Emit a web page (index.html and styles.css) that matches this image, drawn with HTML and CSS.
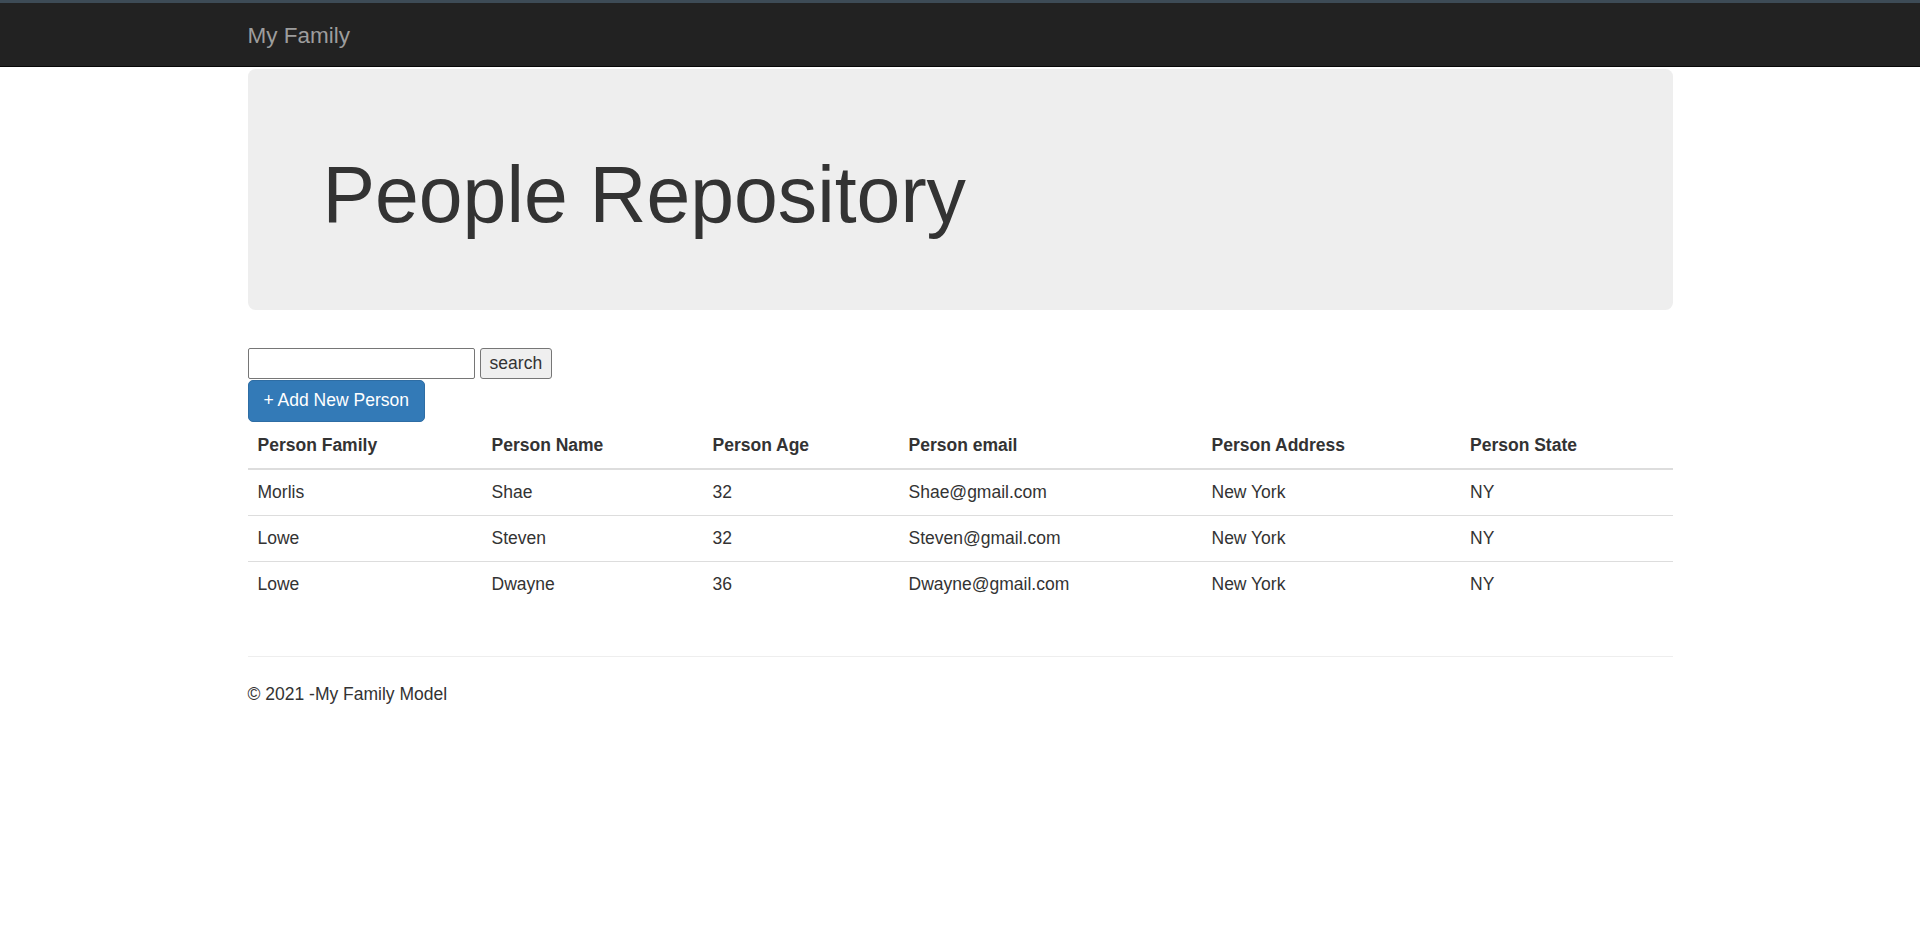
FILE: index.html
```html
<!DOCTYPE html>
<html lang="en">
<head>
<meta charset="utf-8">
<title>People Repository - My Family</title>
<link rel="stylesheet" href="styles.css">
</head>
<body>
<div class="topstrip"></div>
<nav class="navbar">
  <div class="container">
    <a class="brand" href="#">My Family</a>
  </div>
</nav>
<main class="container body-content">
  <div class="jumbotron">
    <h1>People Repository</h1>
  </div>
  <form class="search-form">
    <input class="search-input" type="text">
    <button class="search-btn" type="button">search</button>
  </form>
  <div class="actions">
    <a class="btn-primary" href="#">+ Add New Person</a>
  </div>
  <table class="people">
    <thead>
      <tr>
        <th class="c1">Person Family</th>
        <th class="c2">Person Name</th>
        <th class="c3">Person Age</th>
        <th class="c4">Person email</th>
        <th class="c5">Person Address</th>
        <th class="c6">Person State</th>
      </tr>
    </thead>
    <tbody>
      <tr><td>Morlis</td><td>Shae</td><td>32</td><td>Shae@gmail.com</td><td>New York</td><td>NY</td></tr>
      <tr><td>Lowe</td><td>Steven</td><td>32</td><td>Steven@gmail.com</td><td>New York</td><td>NY</td></tr>
      <tr><td>Lowe</td><td>Dwayne</td><td>36</td><td>Dwayne@gmail.com</td><td>New York</td><td>NY</td></tr>
    </tbody>
  </table>
  <hr class="rule">
  <footer class="footer">
    <p>&copy; 2021 -My Family Model</p>
  </footer>
</main>
</body>
</html>
```

FILE: styles.css
```css
* {
  box-sizing: border-box;
}

html, body {
  margin: 0;
  padding: 0;
  background: #fff;
}

body {
  font-family: "Liberation Sans", Arial, Helvetica, sans-serif;
  font-size: 17.5px;
  line-height: 25px;
  color: #333;
}

.topstrip {
  height: 3px;
  background: #3d4b56;
}

.container {
  width: 1425px;
  margin: 0 auto;
}

.navbar {
  background: #222;
  border-bottom: 1px solid #080808;
}

.brand {
  display: block;
  width: max-content;
  padding: 19.75px 0 17.75px;
  font-size: 22.5px;
  line-height: 25px;
  color: #9d9d9d;
  text-decoration: none;
}

.jumbotron {
  margin: 2px 0 38px;
  padding: 60px 75px;
  background: #eee;
  border-radius: 7.5px;
}

.jumbotron h1 {
  margin: 23.5px 0 11px;
  font-size: 78.75px;
  font-weight: 400;
  line-height: 1.1;
  color: #333;
}

.search-form {
  display: flex;
  gap: 4.6px;
  margin: 0 0 1px;
}

.search-input {
  width: 227.5px;
  height: 31px;
  margin: 0;
  padding: 1px 3px;
  border: 1px solid #767676;
  border-radius: 2px;
  font-family: inherit;
  font-size: 17.5px;
  background: #fff;
}

.search-btn {
  height: 31px;
  margin: 0;
  padding: 0 9px;
  border: 1px solid #767676;
  border-radius: 3px;
  background: #efefef;
  font-family: inherit;
  font-size: 17.5px;
  color: #333;
}

.actions {
  display: flex;
}

.btn-primary {
  display: inline-block;
  padding: 7.5px 15px;
  border: 1.25px solid #2e6da4;
  border-radius: 5px;
  background: #337ab7;
  color: #fff;
  font-size: 17.5px;
  line-height: 25px;
  text-decoration: none;
}

.people {
  width: 100%;
  border-collapse: collapse;
  border-spacing: 0;
  table-layout: fixed;
  margin: 1px 0 25px;
}

.people th,
.people td {
  padding: 10px;
  line-height: 25px;
  text-align: left;
}

.people th {
  font-weight: 700;
  vertical-align: bottom;
  border-bottom: 2.5px solid #ddd;
}

.people td {
  vertical-align: top;
  border-top: 1.25px solid #ddd;
}

.c1 { width: 234px; }
.c2 { width: 221px; }
.c3 { width: 196px; }
.c4 { width: 303px; }
.c5 { width: 258.5px; }
.c6 { width: 212.5px; }

.rule {
  margin: 49.5px 0 25px;
  border: 0;
  border-top: 1.25px solid #eee;
}

.footer p {
  margin: 0 0 12.5px;
}
```
